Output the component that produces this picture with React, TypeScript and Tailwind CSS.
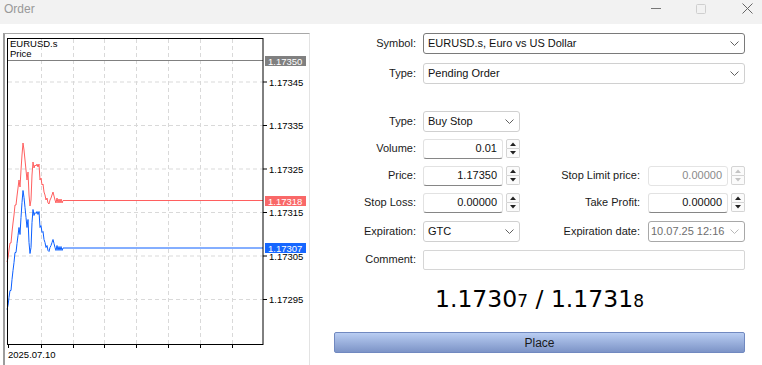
import React from 'react'

const ui = { fontFamily: '"Liberation Sans", Arial, sans-serif' }

// ask line, in page coordinates; bid is the same shape shifted down by the spread
const askPts: [number, number][] = [
  [7, 262], [8, 258], [9, 250], [10, 243], [11, 243], [12, 232], [13, 223], [14, 215],
  [15, 205], [16, 205], [17, 196], [18, 188], [19, 180], [20, 187], [21, 170], [22, 155],
  [23, 143], [24, 150], [25, 160], [26, 170], [27, 180], [28, 172], [29, 195], [30, 206],
  [31, 200], [32, 175], [33, 162], [34, 168], [35, 165], [36, 166], [37, 164], [38, 167],
  [39, 164], [40, 180], [41, 178], [42, 185], [43, 184], [44, 192], [45, 195], [46, 200],
  [47, 198], [48, 203], [49, 204], [50, 200], [51, 198], [52, 195], [53, 192], [54, 196],
  [55, 200], [56, 203], [57, 198], [58, 203], [59, 199], [60, 203], [61, 199], [62, 203],
  [63, 200.5], [263, 200.5],
]
const bidPts = askPts.map(([x, y]) => [x, y + 47.5] as [number, number])
const toPoly = (p: [number, number][]) => p.map(([x, y]) => `${x},${y}`).join(' ')

const gridX = [41, 73, 104, 136, 168, 200, 232]
const axis = [
  { y: 82, t: '1.17345' },
  { y: 125.5, t: '1.17335' },
  { y: 169, t: '1.17325' },
  { y: 212.5, t: '1.17315' },
  { y: 256, t: '1.17305' },
  { y: 299.5, t: '1.17295' },
]

function Chart() {
  return (
    <svg width={305} height={331} viewBox="4 34 305 331" className="block" style={ui}>
      {gridX.map((x) => (
        <line key={x} x1={x + 0.5} y1={39} x2={x + 0.5} y2={344} stroke="#d9d9d9" strokeDasharray="4 3" />
      ))}
      {axis.map((a) => (
        <line key={a.t} x1={8} y1={a.y} x2={263} y2={a.y} stroke="#d9d9d9" strokeDasharray="4 3" />
      ))}
      <line x1={8} y1={60.5} x2={263} y2={60.5} stroke="#808080" />
      <polyline points={toPoly(askPts)} fill="none" stroke="#ff5f5f" strokeWidth={1} />
      <polyline points={toPoly(bidPts)} fill="none" stroke="#0b5fff" strokeWidth={1} />
      <rect x={7.5} y={38.5} width={255.5} height={306} fill="none" stroke="#000" />
      {axis.map((a) => (
        <g key={a.t}>
          <line x1={263} y1={a.y} x2={267} y2={a.y} stroke="#000" />
          <text x={269} y={a.y + 3.5} fontSize={9.5} fill="#000">{a.t}</text>
        </g>
      ))}
      {[8, ...gridX].map((x) => (
        <line key={x} x1={x + 0.5} y1={344} x2={x + 0.5} y2={348} stroke="#000" />
      ))}
      <text x={8} y={357.5} fontSize={9.5} fill="#000">2025.07.10</text>
      <text x={10} y={47} fontSize={9.5} fill="#000">EURUSD.s</text>
      <text x={10} y={57} fontSize={9.5} fill="#000">Price</text>

      <rect x={265} y={56} width={41} height={10} fill="#808080" />
      <text x={268} y={64.5} fontSize={9.5} fill="#fff">1.17350</text>
      <rect x={265} y={196} width={41} height={10} fill="#f96868" />
      <text x={268} y={204.5} fontSize={9.5} fill="#fff">1.17318</text>
      <rect x={265} y={243} width={41} height={10} fill="#1667ff" />
      <text x={268} y={251.5} fontSize={9.5} fill="#fff">1.17307</text>
    </svg>
  )
}

function Chevron({ light }: { light?: boolean }) {
  return (
    <svg width="9" height="5" viewBox="0 0 9 5">
      <path d="M0.5 0.5 L4.5 4.5 L8.5 0.5" fill="none" stroke={light ? '#b8b8b8' : '#606060'} strokeWidth="1" />
    </svg>
  )
}

function Select({
  value,
  className,
  border = 'border-[#d0d0d0]',
  disabled,
}: {
  value: string
  className: string
  border?: string
  disabled?: boolean
}) {
  return (
    <div
      className={`${className} ${border} h-[21px] border rounded-[3px] bg-white flex items-center justify-between ${
        disabled ? 'pl-[2px] text-[#6e6e6e]' : 'pl-[4px] text-[#111]'
      } pr-[5px]`}
    >
      <span>{value}</span>
      <Chevron light={disabled} />
    </div>
  )
}

function Spinner({ disabled }: { disabled?: boolean }) {
  const c = disabled ? '#c4c4c4' : '#222'
  return (
    <div className="w-[14px] h-[19px] flex flex-col ml-[3px]">
      <div className="h-[10px] border border-[#d4d4d4] rounded-t-[2px] bg-[#fbfbfb] flex items-center justify-center">
        <svg width="6" height="4" viewBox="0 0 6 4">
          <path d="M0 4 L3 0.5 L6 4 Z" fill={c} />
        </svg>
      </div>
      <div className="h-[9px] border border-t-0 border-[#d4d4d4] rounded-b-[2px] bg-[#fbfbfb] flex items-center justify-center">
        <svg width="6" height="4" viewBox="0 0 6 4">
          <path d="M0 0 L3 3.5 L6 0 Z" fill={c} />
        </svg>
      </div>
    </div>
  )
}

function NumField({ value, disabled }: { value: string; disabled?: boolean }) {
  return (
    <div className="w-[97px] flex items-center">
      <div
        className={`w-[80px] h-[20px] border rounded-[3px] bg-white flex items-center justify-end pr-[5px] ${
          disabled ? 'border-[#e4e4e4] text-[#8a8a8a]' : 'border-[#e2e2e2] border-b-[#868686] text-[#111]'
        }`}
      >
        {value}
      </div>
      <Spinner disabled={disabled} />
    </div>
  )
}

function Label({ children, w = 'w-[82px]' }: { children: React.ReactNode; w?: string }) {
  return <div className={`${w} text-right text-[#1a1a1a] shrink-0`}>{children}</div>
}

export default function App() {
  return (
    <div className="w-[762px] h-[365px] bg-white overflow-hidden text-[11px]" style={ui}>
      <div className="h-[24px] bg-[#f2f2f2] flex items-start justify-between">
        <span className="ml-[4px] mt-[2px] text-[12px] leading-[14px] text-[#999]">Order</span>
        <div className="flex items-center h-[17px]">
          <svg width="10" height="10" viewBox="0 0 10 10" className="mr-[35px]">
            <line x1="0" y1="4.5" x2="10" y2="4.5" stroke="#777" />
          </svg>
          <svg width="10" height="10" viewBox="0 0 10 10" className="mr-[36px]">
            <rect x="0.5" y="0.5" width="9" height="9" rx="1" fill="none" stroke="#cfcfcf" />
          </svg>
          <svg width="11" height="11" viewBox="0 0 11 11" className="mr-[9px]">
            <path d="M0.5 0.5 L10.5 10.5 M10.5 0.5 L0.5 10.5" stroke="#666" strokeWidth="1" />
          </svg>
        </div>
      </div>

      <div className="flex">
        <div className="ml-[3px] mt-[9px] w-[307px] h-[332px] border-l-2 border-t border-r border-l-[#9c9c9c] border-t-[#a8a8a8] border-r-[#e3e3e3] shrink-0 overflow-hidden">
          <div className="-ml-[1px]">
            <Chart />
          </div>
        </div>

        <div className="ml-[24px] w-[411px] flex flex-col">
          <div className="mt-[9px] h-[21px] flex items-center">
            <Label>Symbol:</Label>
            <Select value="EURUSD.s, Euro vs US Dollar" className="ml-[7px] w-[322px]" border="border-[#7a7a7a]" />
          </div>
          <div className="mt-[9px] h-[21px] flex items-center">
            <Label>Type:</Label>
            <Select value="Pending Order" className="ml-[7px] w-[322px]" />
          </div>

          <div className="mt-[27px] h-[21px] flex items-center">
            <Label>Type:</Label>
            <Select value="Buy Stop" className="ml-[7px] w-[97px]" />
          </div>
          <div className="mt-[6px] h-[21px] flex items-center">
            <Label>Volume:</Label>
            <div className="ml-[7px]">
              <NumField value="0.01" />
            </div>
          </div>
          <div className="mt-[6px] h-[21px] flex items-center">
            <Label>Price:</Label>
            <div className="ml-[7px]">
              <NumField value="1.17350" />
            </div>
            <Label w="w-[120px]">Stop Limit price:</Label>
            <div className="ml-[8px]">
              <NumField value="0.00000" disabled />
            </div>
          </div>
          <div className="mt-[6px] h-[21px] flex items-center">
            <Label>Stop Loss:</Label>
            <div className="ml-[7px]">
              <NumField value="0.00000" />
            </div>
            <Label w="w-[120px]">Take Profit:</Label>
            <div className="ml-[8px]">
              <NumField value="0.00000" />
            </div>
          </div>
          <div className="mt-[8px] h-[21px] flex items-center">
            <Label>Expiration:</Label>
            <Select value="GTC" className="ml-[7px] w-[97px]" />
            <Label w="w-[120px]">Expiration date:</Label>
            <Select value="10.07.25 12:16" className="ml-[8px] w-[97px]" border="border-[#a8a8a8]" disabled />
          </div>
          <div className="mt-[7px] h-[21px] flex items-center">
            <Label>Comment:</Label>
            <div className="ml-[7px] w-[322px] h-[20px] border border-[#d6d6d6] rounded-[2px] bg-white" />
          </div>

          <div
            className="mt-[15px] h-[28px] leading-[28px] text-center text-black text-[23.5px]"
            style={{ fontFamily: '"DejaVu Sans", Verdana, sans-serif' }}
          >
            1.1730<span className="text-[17px]">7</span> / 1.1731<span className="text-[17px]">8</span>
          </div>

          <button className="mt-[19px] h-[21px] w-[411px] border border-[#7189c0] rounded-[2px] bg-gradient-to-b from-[#b9cdf2] to-[#7d94c7] text-[12px] text-[#1a1a1a] flex items-center justify-center">
            Place
          </button>
        </div>
      </div>
    </div>
  )
}
